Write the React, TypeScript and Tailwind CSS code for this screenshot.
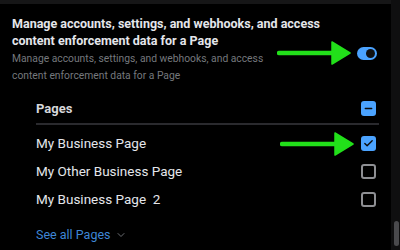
import { Check, ChevronDown, Minus } from 'lucide-react';

const pages = [
  { name: 'My Business Page', checked: true, arrow: true },
  { name: 'My Other Business Page', checked: false, arrow: false },
  { name: 'My Business Page  2', checked: false, arrow: false },
];

function GreenArrow() {
  return (
    <svg width="74" height="24" viewBox="0 0 74 24" className="shrink-0">
      <path d="M2 12 H58" stroke="#22e01a" strokeWidth="4.5" strokeLinecap="round" />
      <path d="M55 1 L73 12 L55 23 Z" fill="#22e01a" stroke="#22e01a" strokeWidth="1.5" strokeLinejoin="round" />
    </svg>
  );
}

function Box({ checked }: { checked: boolean }) {
  if (checked) {
    return (
      <span className="flex h-[15px] w-[15px] items-center justify-center rounded-[3px] bg-[#4ba3ff]">
        <Check size={11} strokeWidth={3} color="#0b0b0b" />
      </span>
    );
  }
  return <span className="h-[15px] w-[15px] rounded-[3px] border-2 border-[#8e8f93]" />;
}

export default function App() {
  return (
    <div className="flex h-[250px] w-[400px] overflow-hidden bg-black font-['Roboto',sans-serif]">
      <div className="flex-1 border-t-4 border-[#161617] pl-3 pr-3">
        <div className="pt-[11px]">
          <p className="text-[12.5px] font-bold leading-[17px] text-[#e4e6eb]">
            Manage accounts, settings, and webhooks, and access
            <br />
            content enforcement data for a Page
          </p>
          <p className="mt-[1px] text-[10.3px] leading-[17px] text-[#75787d]">
            Manage accounts, settings, and webhooks, and access
            <br />
            content enforcement data for a Page
          </p>
        </div>
        <div className="-mt-[43px] mb-[26px] flex items-center justify-end gap-[6px] pr-[2px]">
          <GreenArrow />
          <span className="flex h-[13px] w-[20px] items-center justify-end rounded-full bg-[#4ba3ff] px-[2px]">
            <span className="h-[9px] w-[9px] rounded-full bg-[#111]" />
          </span>
        </div>
        <div className="ml-6">
          <div className="flex items-center justify-between border-b-2 border-[#2a2a2e] pb-[4px] pt-[8px]">
            <span className="text-[13px] font-bold text-[#d6d7da]">Pages</span>
            <span className="mr-[3px] flex h-[15px] w-[15px] items-center justify-center rounded-[3px] bg-[#4ba3ff]">
              <Minus size={11} strokeWidth={3} color="#0b0b0b" />
            </span>
          </div>
          <ul className="pt-[5px]">
            {pages.map((p) => (
              <li key={p.name} className="flex h-[28px] items-center justify-between">
                <span className="whitespace-pre text-[13.5px] text-[#e4e6eb]">{p.name}</span>
                <div className="mr-[3px] flex items-center gap-[7px]">
                  {p.arrow ? <GreenArrow /> : null}
                  <Box checked={p.checked} />
                </div>
              </li>
            ))}
          </ul>
          <div className="mt-[12px] flex items-center gap-[5px] text-[12.5px] text-[#3e86d6]">
            See all Pages
            <ChevronDown size={12} color="#6b6e73" />
          </div>
        </div>
      </div>
      <div className="relative w-[9px] bg-[#0f0f10]">
        <span className="absolute bottom-[4px] left-[3px] h-[25px] w-[5px] rounded-full bg-[#4a4a4d]" />
      </div>
    </div>
  );
}
